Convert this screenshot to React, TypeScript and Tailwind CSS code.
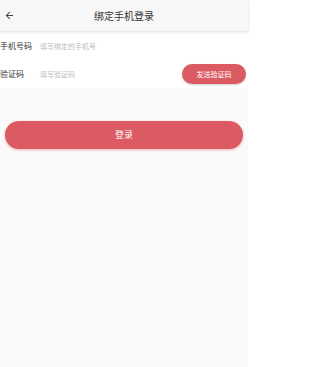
import { ArrowLeft } from "lucide-react";

const font = { fontFamily: '"Noto Sans CJK SC", "Noto Sans", sans-serif' };

export default function App() {
  return (
    <div className="w-[248px] h-[367px] bg-[#fafafa] flex flex-col" style={font}>
      <header className="shrink-0 h-[31px] bg-[#f7f7f7] shadow-[0_1px_3px_rgba(0,0,0,0.15)] relative z-10 flex items-center justify-center">
        <ArrowLeft className="absolute left-[4px] top-[10px] w-[11px] h-[11px] text-[#444]" strokeWidth={2.2} />
        <h1 className="text-[10px] text-[#333] leading-none">绑定手机登录</h1>
      </header>

      <div className="bg-white flex flex-col pt-[1px]">
        <div className="h-[28px] flex items-center">
          <span className="w-[40px] shrink-0 text-[8px] text-[#333] leading-none">手机号码</span>
          <span className="text-[7px] text-[#bbb] leading-none">填写绑定的手机号</span>
        </div>
        <div className="h-[28px] flex items-center pr-[2px]">
          <span className="w-[40px] shrink-0 text-[8px] text-[#333] leading-none">验证码</span>
          <span className="flex-1 text-[7px] text-[#bbb] leading-none">填写验证码</span>
          <button className="w-[64px] h-[20px] rounded-full bg-[#dc5a61] text-white text-[7px] leading-none shadow-[0_1px_2px_rgba(0,0,0,0.2)]">
            发送验证码
          </button>
        </div>
      </div>

      <div className="px-[5px] pt-[31px]">
        <button className="w-full h-[28px] rounded-full bg-[#dc5a61] text-white text-[9px] leading-none shadow-[0_1px_3px_rgba(220,90,97,0.45)]">
          登录
        </button>
      </div>
    </div>
  );
}
